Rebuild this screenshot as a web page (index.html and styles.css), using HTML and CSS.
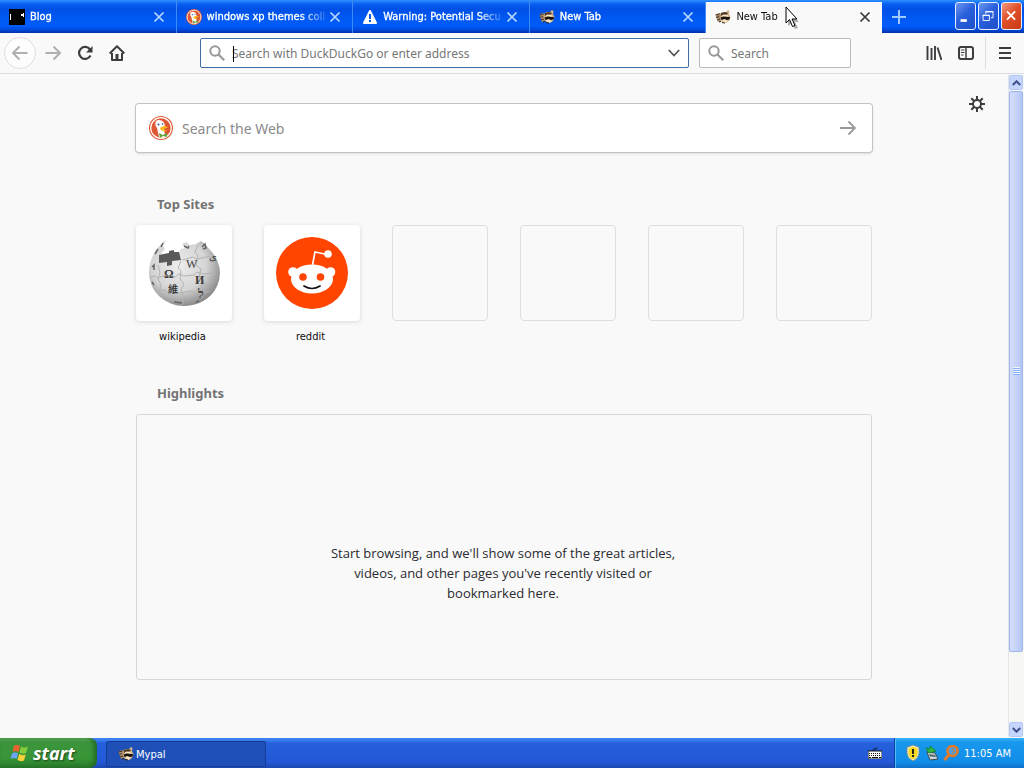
FILE: index.html
```html
<!DOCTYPE html>
<html lang="en">
<head>
	<meta charset="utf-8">
	<title>New Tab - Mypal</title>
	<meta name="viewport" content="width=device-width, initial-scale=1">
	<link rel="stylesheet" href="styles.css">
</head>
<body>

	<!-- icons that are used more than once -->
	<svg class="sprites" aria-hidden="true">
		<symbol id="close" viewBox="0 0 12 12">
			<path d="M1.5 1.5l9 9M10.500 1.500l-9 9" fill="none" stroke="currentColor" stroke-width="1.700"/>
		</symbol>
		<symbol id="glass" viewBox="0 0 16 16">
			<circle cx="6" cy="6" r="4.700" fill="none" stroke="currentColor" stroke-width="2"/>
			<path d="M9.500 9.500l5.700 5.700" stroke="currentColor" stroke-width="2.200"/>
		</symbol>
		<symbol id="raccoon" viewBox="0 0 16 16">
			<path d="M1 5l4-1 2 2-1 6-3 1-1-3-1-2z" fill="#a88c6c"/>
			<path d="M.5 6l4-1M1 8.500l3-1M2 11l3-1" stroke="#4a382a"/>
			<path d="M6 4l2-1 3 0 2-2 1.500 1-.5 3 1.500 3-1.500 4-3 2-4-1-2-4z" fill="#d3b48a"/>
			<path d="M6 4l4-1 3 1-1 1.500-4 0-2 1.500z" fill="#4d3a2a"/>
			<path d="M5.500 8.500l3-1 3 .5 3.500 0-.5 2.500-3 .5-2-1-3 1z" fill="#18130f"/>
			<path d="M7 7l3-.7 3 .7M10 10.500l1 1" stroke="#fff0cf" fill="none"/>
			<path d="M7 11.500l2-1 3 1 1 .5-3 2z" fill="#f3e5c8"/>
			<path d="M4 13l2-.5M7 13.500l3 .5" stroke="#2b2119"/>
		</symbol>
		<symbol id="duck" viewBox="0 0 24 24">
			<circle cx="12" cy="12" r="12" fill="#de5833"/>
			<circle cx="12" cy="12" r="10.300" fill="none" stroke="#fff" stroke-width="1.200"/>
			<path d="M7 5c2-2 7-1 8 2 1 2 1 3 0 5l1 9c-2 1-5 1-6 0L8 12C6 10 6 7 7 5z" fill="#fff"/>
			<circle cx="9.500" cy="8.500" r="1" fill="#2d4f8e"/>
			<circle cx="13.500" cy="8" r=".800" fill="#2d4f8e"/>
			<path d="M11 12c2-2 6-2 8-1-1 1-3 1.500-5 2 2 1 3 1 4 1-2 2-7 1-7-2z" fill="#fdb515"/>
			<path d="M10 17l4 2 4-2v4l-4-1-3 2z" fill="#65a33e"/>
		</symbol>
	</svg>

	<header class="titlebar">
		<div class="tabs">
			<div class="tab">
				<svg class="favicon" viewBox="0 0 16 16"><path fill="#000" d="M0 0h16v16H0z"/><path fill="#fff" d="M1 5h1v6H1zM14 4h1v4h-1zM12 5h2v2h-2z"/></svg>
				<button class="tab-title">Blog</button>
				<button class="tab-close" aria-label="Close Blog"><svg><use href="#close"/></svg></button>
			</div>
			<div class="tab">
				<svg class="favicon"><use href="#duck"/></svg>
				<button class="tab-title">windows xp themes coll</button>
				<button class="tab-close" aria-label="Close windows xp themes"><svg><use href="#close"/></svg></button>
			</div>
			<div class="tab">
				<svg class="favicon" viewBox="0 0 16 16"><path d="M8 2l6 12H2z" fill="#fff" stroke="#fff" stroke-width="2" stroke-linejoin="round"/><path d="M7 5h2v5H7zM7 11h2v2H7z" fill="#0a58e6"/></svg>
				<button class="tab-title">Warning: Potential Secu</button>
				<button class="tab-close" aria-label="Close Warning"><svg><use href="#close"/></svg></button>
			</div>
			<div class="tab">
				<svg class="favicon"><use href="#raccoon"/></svg>
				<button class="tab-title">New Tab</button>
				<button class="tab-close" aria-label="Close New Tab"><svg><use href="#close"/></svg></button>
			</div>
			<div class="tab active">
				<svg class="favicon"><use href="#raccoon"/></svg>
				<button class="tab-title">New Tab</button>
				<button class="tab-close" aria-label="Close New Tab"><svg><use href="#close"/></svg></button>
				<svg class="cursor" viewBox="0 0 14 24"><path d="M3 3v17l4-3 3 6 3-1-3-6h4z" fill="#000" opacity=".3"/><path d="M1 1v16l3.500-3.500 3 7 2.500-1-3-6.500h5z" fill="#fff" stroke="#000"/></svg>
			</div>
		</div>
		<button class="add" aria-label="New tab"><svg viewBox="0 0 14 14"><path d="M7 0v14M0 7h14" stroke="currentColor" stroke-width="2"/></svg></button>
		<div class="window-buttons">
			<button aria-label="Minimize"><svg viewBox="0 0 21 27"><path d="M5 17h7v3H5z" fill="#fff"/></svg></button>
			<button aria-label="Restore"><svg viewBox="0 0 21 27"><path d="M7.500 11V8.500h8v7H13M7 9h9" fill="none" stroke="#fff"/><path d="M4.500 12.500h7v6h-7zM4 13h8" fill="none" stroke="#fff"/></svg></button>
			<button class="quit" aria-label="Close"><svg viewBox="0 0 21 27"><path d="M5.500 8.500l9 9M14.500 8.500l-9 9" stroke="#fff" stroke-width="2"/></svg></button>
		</div>
	</header>

	<nav class="toolbar">
		<button class="tool back" aria-label="Back"><svg viewBox="0 0 16 16"><path d="M15.500 8H1M7.500 1.500L1 8l6.500 6.500" fill="none" stroke="currentColor" stroke-width="2"/></svg></button>
		<button class="tool dim" aria-label="Forward"><svg viewBox="0 0 16 16"><path d="M.5 8H15M8.500 1.500L15 8l-6.500 6.500" fill="none" stroke="currentColor" stroke-width="2"/></svg></button>
		<button class="tool" aria-label="Reload"><svg viewBox="0 0 16 16"><path d="M13 4.500A6 6 0 1 0 13.500 10.500" fill="none" stroke="currentColor" stroke-width="2.200"/><path d="M15.500 1v6.500H9z" fill="currentColor"/></svg></button>
		<button class="tool" aria-label="Home"><svg viewBox="0 0 16 16"><path d="M.7 8.500L8 1.300l7.300 7.200M3 8v7h10V8" fill="none" stroke="currentColor" stroke-width="2" stroke-linejoin="round"/><path d="M6.500 9h3v6h-3z" fill="currentColor"/></svg></button>
		<div class="field url">
			<svg><use href="#glass"/></svg>
			<input type="text" aria-label="Address" placeholder="Search with DuckDuckGo or enter address">
			<span class="caret"></span>
			<button aria-label="Show history"><svg viewBox="0 0 12 12"><path d="M.8 3l5.200 5.500L11.200 3" fill="none" stroke="currentColor" stroke-width="1.800"/></svg></button>
		</div>
		<div class="field search">
			<svg><use href="#glass"/></svg>
			<input type="text" aria-label="Search" placeholder="Search">
		</div>
		<button class="tool" aria-label="Library"><svg viewBox="0 0 16 16"><path d="M1.500 1v14M5.500 3v12M9 1v14M11.500 2.500L15.500 15" fill="none" stroke="currentColor" stroke-width="1.900"/></svg></button>
		<button class="tool" aria-label="Sidebars"><svg viewBox="0 0 16 16"><rect x="1" y="2" width="14" height="12" rx="2" fill="none" stroke="currentColor" stroke-width="2"/><path d="M8 2v12" stroke="currentColor" stroke-width="1.500"/><path d="M3 5h3.500M3 7.500h3.500M3 10h2.500" stroke="currentColor"/></svg></button>
		<div class="separator"></div>
		<button class="tool" aria-label="Menu"><svg viewBox="0 0 16 16"><path d="M2 3h12M2 8h12M2 13h12" stroke="currentColor" stroke-width="2"/></svg></button>
	</nav>

	<div class="page">
		<main>
			<button class="prefs" aria-label="Settings"><svg viewBox="0 0 16 16"><circle cx="8" cy="8" r="4" fill="none" stroke="currentColor" stroke-width="2"/><path d="M8 0v4M8 12v4M0 8h4M12 8h4M2.300 2.300l3 3M10.700 10.700l3 3M2.300 13.700l3-3M10.700 5.300l3-3" stroke="currentColor" stroke-width="2"/></svg></button>
			<div class="content">
				<form class="web-search">
					<svg class="logo"><use href="#duck"/></svg>
					<input type="text" aria-label="Search the Web" placeholder="Search the Web">
					<button type="button" aria-label="Search"><svg viewBox="0 0 16 16"><path d="M0 8h15M8.500 1.500L15 8l-6.500 6.500" fill="none" stroke="currentColor" stroke-width="1.800"/></svg></button>
				</form>

				<h2>Top Sites</h2>
				<div class="sites">
					<a class="site" href="#">
						<span class="tile">
							<svg viewBox="0 0 72 72">
								<defs><radialGradient id="ball" cx=".42" cy=".38" r=".65"><stop offset="0" stop-color="#ededed"/><stop offset=".6" stop-color="#d4d4d4"/><stop offset="1" stop-color="#858585"/></radialGradient></defs>
								<path d="M18 3l-3 6 2 3-4 5 18-2 2-3 4-1-3-4 4-2 4 3 6-1 5-3 4 3 5 6A35 33 0 0 1 36 69 35 33 0 0 1 1 36Q1 16 18 3z" fill="url(#ball)"/>
								<path d="M11 18l10-2 0-2 5-1 0 2 5 0 2 8-9 1 0 4-5 1 0-4-8 1z" fill="#5a5a5a"/>
								<path d="M2 40l5-1 3 2 5-2 12 1 4-3 5 2 10-1 3-3 5 2 14-1M10 28l2 8-2 6 3 6-2 8 5 6M33 24l-3 7 3 3-1 8 4 5-3 6 3 7-2 8M50 8l-3 7 3 4-2 9 5 4-2 8 5 4-4 9 2 7M8 54l9-1 4 4 11-1 12-2 4 3 14-3M34 23l11-3 4 2 14-3" fill="none" stroke="#b2b2b2"/>
								<g fill="#3d3d3d" font-family="Liberation Serif, serif" font-size="12">
									<text x="16" y="41" font-weight="bold">Ω</text><text x="38" y="31">W</text><text x="47" y="47" font-weight="bold">И</text><text x="50" y="61" font-weight="bold">ל</text><text x="20" y="56" font-family="Noto Sans CJK TC, sans-serif" font-weight="bold" font-size="10">維</text><text x="61" y="23" font-size="10">ى</text>
								</g>
								<path d="M15 6l-2 4M10 12l-3 5M36 9l4 2 1-2M54 10l3-3 1 4-3 1M4 30l2-2 0 5M4 45l2 3M26 65l8 1M48 65l3-1" fill="none" stroke="#666" stroke-width="1.500"/>
							</svg>
						</span>
						<span class="site-name">wikipedia</span>
					</a>
					<a class="site" href="#">
						<span class="tile">
							<svg viewBox="0 0 72 72">
								<circle cx="36" cy="36" r="36" fill="#ff4500"/>
								<path d="M36.500 28l2.500-13 12 2.500" fill="none" stroke="#fff" stroke-width="1.700"/>
								<circle cx="52" cy="17" r="3.800" fill="#fff"/>
								<circle cx="17" cy="35" r="4.800" fill="#fff"/><circle cx="54.500" cy="35" r="4.800" fill="#fff"/>
								<ellipse cx="36" cy="42" rx="21" ry="14.500" fill="#fff"/>
								<circle cx="27" cy="40" r="3.800" fill="#ff4500"/><circle cx="44.500" cy="40" r="3.800" fill="#ff4500"/>
								<path d="M28 49q8 5 16 0" fill="none" stroke="#111" stroke-width="1.700" stroke-linecap="round"/>
							</svg>
						</span>
						<span class="site-name">reddit</span>
					</a>
					<div class="site empty"><span class="tile"></span></div>
					<div class="site empty"><span class="tile"></span></div>
					<div class="site empty"><span class="tile"></span></div>
					<div class="site empty"><span class="tile"></span></div>
				</div>

				<h2>Highlights</h2>
				<div class="highlights">
					<p>Start browsing, and we'll show some of the great articles, videos, and other pages you've recently visited or bookmarked here.</p>
				</div>
			</div>
		</main>
		<div class="scrollbar">
			<button aria-label="Scroll up"><svg viewBox="0 0 9 6"><path d="M.8 5L4.500 1.300 8.200 5" fill="none" stroke="#3c508c" stroke-width="2"/></svg></button>
			<div class="track">
				<div class="thumb"><span class="grip"></span></div>
			</div>
			<button aria-label="Scroll down"><svg viewBox="0 0 9 6"><path d="M.8 1l3.700 3.700L8.200 1" fill="none" stroke="#3c508c" stroke-width="2"/></svg></button>
		</div>
	</div>

	<footer class="taskbar">
		<button class="start">
			<svg viewBox="0 0 20 20"><path d="M4 3q3-2 6 0L8.500 9q-3-2-6 0z" fill="#f0602c"/><path d="M11 3.500q3 2 7 0L16 10q-3 1.500-6.500-.5z" fill="#85cc3c"/><path d="M2 10.500q3-2 6 0L6.500 16q-3-2-6 0z" fill="#6fa3f8"/><path d="M9.200 11q3 2 6.500.5L14 17.500q-3 1.500-6.500-.5z" fill="#fbd13a"/></svg>
			start
		</button>
		<button class="task"><svg><use href="#raccoon"/></svg>Mypal</button>
		<svg class="keyboard" viewBox="0 0 14 12"><path d="M5 3.500q0-1.500 2-1.500t2-1.500" fill="none" stroke="#111"/><path d="M0 4h14v8H0z" fill="#fff" stroke="#111"/><path d="M1 6.500h12M1 8.500h12" stroke="#111" stroke-dasharray="1 1"/><path d="M1 10.500h2M4 10.500h6M11 10.500h2" stroke="#111"/></svg>
		<div class="tray">
			<svg viewBox="0 0 16 16"><path d="M8 0l5 2h1v6q0 5-6 8-6-3-6-8V2h1z" fill="#f4f1dc" stroke="#7d8172" stroke-width=".8"/><path d="M8 1.500l4.500 2V8q0 4-4.500 6.500Q3.500 12 3.500 8V3.500z" fill="#f8d71c"/><path d="M7 4h2v5H7zM7 10h2v2H7z" fill="#222"/></svg>
			<svg viewBox="0 0 16 16"><path d="M3 7l8 1 3 6-8 1z" fill="#d3d9da" stroke="#384c53"/><path d="M5 9l6 1 1 2-6-.5z" fill="#54696d"/><path d="M2 3l4 1V1l6 5-6 2-2-1z" fill="#2eb83e" stroke="#15772a" stroke-width=".7"/></svg>
			<svg viewBox="0 0 16 16"><circle cx="9.500" cy="6" r="5" fill="#4d9edb" stroke="#e67a23" stroke-width="2.500"/><path d="M6 9.500L1.500 15" stroke="#e67a23" stroke-width="3"/><path d="M9 4l3 2-3 2" fill="none" stroke="#e67a23"/></svg>
			<span class="clock">11:05 AM</span>
		</div>
	</footer>

</body>
</html>
```
FILE: styles.css
```css
* {
	box-sizing: border-box;
}
body {
	display: flex;
	flex-direction: column;
	height: 100vh;
	margin: 0;
	overflow: hidden;
	background: #f9f9fa;
	color: #0c0c0d;
	font-family: "Noto Sans", "Open Sans", sans-serif;
	font-size: 12px;
}
button, input {
	margin: 0;
	padding: 0;
	border: 0;
	background: none;
	color: inherit;
	font: inherit;
}
svg {
	flex: none;
	display: block;
}
.sprites {
	position: absolute;
	width: 0;
	height: 0;
}

/* tabs and window buttons */
.titlebar {
	display: flex;
	flex: none;
	height: 33px;
	background: linear-gradient(#2b90ff 0, #0a5ff0 4px, #0050e6 9px, #0058f2 18px, #005cfa 26px, #0048d8 30px, #0030a8 33px);
	color: #fff;
	font-family: "DejaVu Sans Condensed", "DejaVu Sans", sans-serif;
	font-size: 11px;
}
.tabs {
	display: flex;
	flex: 0 1 882px;
	min-width: 0;
}
.tab {
	position: relative;
	display: flex;
	flex: 1;
	align-items: center;
	min-width: 0;
	padding: 0 11px 0 9px;
	border-right: 1px solid #3d8bf5;
}
.tab.active {
	margin-top: 2px;
	padding-bottom: 2px;
	border: 0;
	background: #f9f9fa;
	color: #0c0c0d;
}
.favicon {
	width: 16px;
	height: 16px;
}
.tab-title {
	flex: 1;
	min-width: 0;
	margin: 0 0 0 5px;
	overflow: hidden;
	text-align: left;
	white-space: nowrap;
	-webkit-text-stroke: 0.3px;
	-webkit-mask-image: linear-gradient(to left, transparent, #000 28px);
	mask-image: linear-gradient(to left, transparent, #000 28px);
}
.active .tab-title {
	-webkit-text-stroke: 0;
}
.tab-close {
	color: #b9d8ff;
}
.active .tab-close {
	color: #38383d;
}
.tab-close svg {
	width: 12px;
	height: 12px;
}
.cursor {
	position: absolute;
	top: 4px;
	left: 79px;
	width: 14px;
	height: 24px;
}
.add {
	width: 34px;
	color: #9fcaff;
}
.add svg {
	width: 14px;
	height: 14px;
	margin: auto;
}
.window-buttons {
	display: flex;
	gap: 2px;
	margin: 2px 2px 0 auto;
}
.window-buttons button {
	width: 21px;
	height: 28px;
	border: 1px solid #e6efff;
	border-radius: 3px;
	background: linear-gradient(135deg, #6c97f0, #2a5fdc 45%, #1d50c8);
}
.window-buttons .quit {
	background: linear-gradient(135deg, #f09a80, #e05028 45%, #c63a14);
}
.window-buttons svg {
	width: 100%;
	height: 100%;
}

/* navigation toolbar */
.toolbar {
	display: flex;
	flex: none;
	align-items: center;
	height: 41px;
	padding: 0 3px 0 4px;
	border-bottom: 1px solid #d9dee6;
	background: #f9f9fa;
	color: #3d3d40;
}
.tool {
	flex: none;
	width: 32px;
	height: 32px;
}
.tool svg {
	width: 16px;
	height: 16px;
	margin: auto;
}
.tool.back {
	margin-right: 1px;
	border: 1px solid #dedee0;
	border-radius: 50%;
	background: #fdfdfd;
	color: #b0b0b0;
}
.tool.dim {
	color: #b0b0b0;
}
.field {
	position: relative;
	display: flex;
	align-items: center;
	height: 30px;
	padding: 0 8px;
	border: 1px solid #bbb;
	border-radius: 2px;
	background: #fff;
	color: #999;
}
.field > svg {
	width: 16px;
	height: 16px;
}
.field input {
	flex: 1;
	min-width: 0;
	margin-left: 7px;
	color: #0c0c0d;
	outline: 0;
}
.field input::placeholder {
	color: #777;
	opacity: 1;
}
.url {
	flex: 1;
	min-width: 0;
	margin: 0 10px 0 67px;
	border-color: #3f6ea8;
}
.url button {
	color: #555;
}
.url button svg {
	width: 12px;
	height: 12px;
}
.caret {
	position: absolute;
	top: 7px;
	left: 32px;
	width: 1px;
	height: 16px;
	background: #000;
}
.search {
	width: 152px;
	margin-right: 67px;
}
.separator {
	width: 1px;
	height: 32px;
	margin: 0 3px;
	background: #dedee0;
}

/* new tab page */
.page {
	display: flex;
	flex: 1;
	min-height: 0;
}
main {
	position: relative;
	flex: 1;
	min-width: 0;
	padding: 30px 24px 0;
	overflow: hidden;
}
.prefs {
	position: absolute;
	top: 22px;
	right: 23px;
	color: #3d3d40;
}
.prefs svg {
	width: 16px;
	height: 16px;
}
.content {
	max-width: 736px;
	margin: 0 auto;
}
.web-search {
	display: flex;
	align-items: center;
	height: 48px;
	padding: 0 16px 0 13px;
	border-radius: 3px;
	background: #fff;
	box-shadow: 0 0 0 1px #c3c3c5, 0 2px 3px #dcdcde;
	color: #999;
	font-size: 14px;
}
.web-search .logo {
	width: 24px;
	height: 24px;
}
.web-search input {
	flex: 1;
	min-width: 0;
	margin: 0 9px;
	outline: 0;
}
.web-search input::placeholder {
	color: #8a8a8a;
	opacity: 1;
}
.web-search button svg {
	width: 16px;
	height: 16px;
}
h2 {
	margin: 41px 0 10px 21px;
	color: #737373;
	font-size: 13px;
	font-weight: bold;
	line-height: 22px;
}
.sites {
	display: grid;
	grid-template-columns: repeat(6, 96px);
	justify-content: space-between;
}
.site {
	color: #0c0c0d;
	font-family: "DejaVu Sans Condensed", "DejaVu Sans", sans-serif;
	font-size: 11px;
	text-align: center;
	text-decoration: none;
}
.tile {
	display: flex;
	align-items: center;
	justify-content: center;
	height: 96px;
	border-radius: 4px;
	background: #fff;
	box-shadow: 0 1px 4px #d8d8da;
}
.tile svg {
	width: 72px;
	height: 72px;
}
.empty .tile {
	border: 1px solid #dedee0;
	background: none;
	box-shadow: none;
}
.site-name {
	display: block;
	padding-right: 3px;
	line-height: 32px;
}
.sites + h2 {
	margin-top: 29px;
}
.highlights {
	display: flex;
	align-items: center;
	justify-content: center;
	height: 266px;
	border: 1px solid #d7d7db;
	border-radius: 3px;
}
.highlights p {
	max-width: 350px;
	margin: 52px 2px 0 0;
	color: #2a2a2e;
	font-family: "Open Sans", "Noto Sans", sans-serif;
	font-size: 13px;
	line-height: 20px;
	text-align: center;
}

.scrollbar {
	display: flex;
	flex: none;
	flex-direction: column;
	width: 16px;
	padding: 1px 1px 1px 0;
	border-left: 1px solid #e4e6ea;
	background: #f7f7f3;
}
.scrollbar button {
	height: 15px;
	border: 1px solid #b4c8f6;
	border-radius: 2px;
	background: #c6d5fd;
}
.scrollbar button svg {
	width: 9px;
	height: 6px;
	margin: auto;
}
.track {
	flex: 1;
	padding: 1px 0;
}
.thumb {
	display: flex;
	align-items: center;
	justify-content: center;
	height: 89%;
	border: 1px solid #9db6ee;
	border-radius: 2px;
	background: linear-gradient(to right, #d3ddfd, #c3d1fb 60%, #b3c5f5);
}
.grip {
	width: 7px;
	height: 8px;
	background: repeating-linear-gradient(#eef4fe 0 1px, #8cb0f8 1px 2px);
}

/* taskbar */
.taskbar {
	display: flex;
	flex: none;
	align-items: center;
	height: 30px;
	background: linear-gradient(#3a80f0 0, #3a80f0 2px, #2560dc 5px, #2358d6 24px, #1c48b0 30px);
	color: #fff;
	font-family: "DejaVu Sans Condensed", "DejaVu Sans", sans-serif;
	font-size: 11px;
}
.start {
	display: flex;
	align-items: center;
	gap: 3px;
	width: 97px;
	height: 30px;
	padding: 0 0 0 10px;
	border-radius: 0 8px 8px 0;
	background: linear-gradient(#6cb86c 0, #3c943c 4px, #379637 20px, #2a7a2a 30px);
	box-shadow: inset -3px 0 4px #236a26;
	font-family: "Noto Sans", sans-serif;
	font-size: 18px;
	font-style: italic;
	font-weight: bold;
	line-height: 20px;
	text-shadow: 1px 1px 2px #1d431d;
}
.start svg {
	width: 20px;
	height: 20px;
}
.task {
	display: flex;
	align-items: center;
	gap: 2px;
	width: 160px;
	height: 26px;
	margin: 2px 0 0 9px;
	padding-left: 11px;
	border: 1px solid #153c96;
	border-radius: 2px;
	background: #1e50b8;
}
.task svg {
	width: 16px;
	height: 16px;
}
.keyboard {
	width: 14px;
	height: 12px;
	margin: 0 12px 0 auto;
}
.tray {
	display: flex;
	align-items: center;
	gap: 3px;
	height: 30px;
	padding: 0 13px 0 10px;
	border-left: 1px solid #0c3c9c;
	background: linear-gradient(#3cb4f8 0, #1898ee 4px, #118de8 24px, #0f70c8 30px);
	box-shadow: inset 1px 0 #4cc0f8;
}
.tray svg {
	width: 16px;
	height: 16px;
}
.clock {
	margin-left: 2px;
}
```
